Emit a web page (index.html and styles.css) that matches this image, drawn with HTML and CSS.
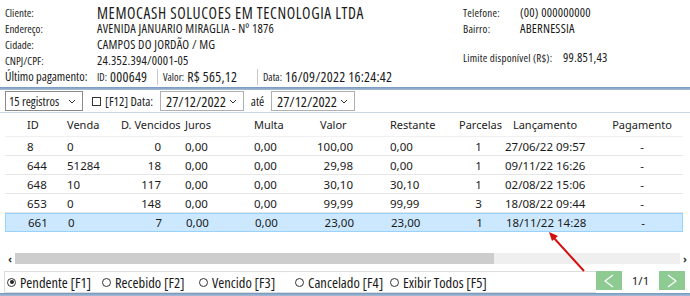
FILE: index.html
```html
<!DOCTYPE html>
<html lang="pt-BR">
<head>
<meta charset="utf-8">
<link rel="stylesheet" href="styles.css">
</head>
<body>
<div class="page">
  <header class="info">
    <div class="info-left">
      <div class="row"><span class="lbl">Cliente:</span><span class="val big">MEMOCASH SOLUCOES EM TECNOLOGIA LTDA</span></div>
      <div class="row"><span class="lbl">Endereço:</span><span class="val">AVENIDA JANUARIO MIRAGLIA - Nº 1876</span></div>
      <div class="row"><span class="lbl">Cidade:</span><span class="val">CAMPOS DO JORDÃO / MG</span></div>
      <div class="row"><span class="lbl">CNPJ/CPF:</span><span class="val">24.352.394/0001-05</span></div>
      <div class="row"><span class="lbl lbl-pay">Último pagamento:</span>
        <span class="pay">
          <span class="pay-item pay-id"><span class="small">ID:</span><span class="num">000649</span></span>
          <span class="pay-item pay-valor"><span class="small">Valor:</span><span class="num">R$ 565,12</span></span>
          <span class="pay-item pay-data"><span class="small">Data:</span><span class="num">16/09/2022 16:24:42</span></span>
        </span>
      </div>
    </div>
    <div class="info-right">
      <div class="row"><span class="rlbl">Telefone:</span><span class="val">(00) 000000000</span></div>
      <div class="row"><span class="rlbl">Bairro:</span><span class="val">ABERNESSIA</span></div>
      <div class="row row-gap"></div>
      <div class="row"><span class="rlbl wide">Limite disponível (R$):</span><span class="val">99.851,43</span></div>
    </div>
  </header>
  <div class="rule"></div>
  <div class="filters">
    <div class="select">15 registros<svg class="chev" viewBox="0 0 8 5" width="8" height="5"><path d="M1 1 L4 4 L7 1" fill="none" stroke="#333" stroke-width="1"/></svg></div>
    <label class="check"><span class="box"></span>[F12] Data:</label>
    <div class="date">27/12/2022<svg class="chev" viewBox="0 0 8 5" width="8" height="5"><path d="M1 1 L4 4 L7 1" fill="none" stroke="#333" stroke-width="1"/></svg></div>
    <span class="ate">até</span>
    <div class="date">27/12/2022<svg class="chev" viewBox="0 0 8 5" width="8" height="5"><path d="M1 1 L4 4 L7 1" fill="none" stroke="#333" stroke-width="1"/></svg></div>
  </div>
  <div class="grid">
    <div class="tr th">
      <span class="c-id">ID</span><span class="c-venda">Venda</span><span class="c-dv h">D. Vencidos</span><span class="c-juros">Juros</span><span class="c-multa">Multa</span><span class="c-valor h">Valor</span><span class="c-rest">Restante</span><span class="c-parc h">Parcelas</span><span class="c-lanc">Lançamento</span><span class="c-pag">Pagamento</span>
    </div>
    <div class="tr">
      <span class="c-id">8</span><span class="c-venda">0</span><span class="c-dv">0</span><span class="c-juros">0,00</span><span class="c-multa">0,00</span><span class="c-valor">100,00</span><span class="c-rest">0,00</span><span class="c-parc">1</span><span class="c-lanc">27/06/22 09:57</span><span class="c-pag">-</span>
    </div>
    <div class="tr">
      <span class="c-id">644</span><span class="c-venda">51284</span><span class="c-dv">18</span><span class="c-juros">0,00</span><span class="c-multa">0,00</span><span class="c-valor">29,98</span><span class="c-rest">0,00</span><span class="c-parc">1</span><span class="c-lanc">09/11/22 16:26</span><span class="c-pag">-</span>
    </div>
    <div class="tr">
      <span class="c-id">648</span><span class="c-venda">10</span><span class="c-dv">117</span><span class="c-juros">0,00</span><span class="c-multa">0,00</span><span class="c-valor">30,10</span><span class="c-rest">30,10</span><span class="c-parc">1</span><span class="c-lanc">02/08/22 15:06</span><span class="c-pag">-</span>
    </div>
    <div class="tr">
      <span class="c-id">653</span><span class="c-venda">0</span><span class="c-dv">148</span><span class="c-juros">0,00</span><span class="c-multa">0,00</span><span class="c-valor">99,99</span><span class="c-rest">99,99</span><span class="c-parc">3</span><span class="c-lanc">18/08/22 09:44</span><span class="c-pag">-</span>
    </div>
    <div class="tr sel">
      <span class="c-id">661</span><span class="c-venda">0</span><span class="c-dv">7</span><span class="c-juros">0,00</span><span class="c-multa">0,00</span><span class="c-valor">23,00</span><span class="c-rest">23,00</span><span class="c-parc">1</span><span class="c-lanc">18/11/22 14:28</span><span class="c-pag">-</span>
    </div>
  </div>
  <div class="hscroll">
    <span class="sarrow">&lsaquo;</span>
    <div class="track"><div class="thumb"></div></div>
    <span class="sarrow">&rsaquo;</span>
  </div>
  <div class="footer">
    <div class="radios">
      <label class="radio on"><span class="dot"></span>Pendente [F1]</label>
      <label class="radio"><span class="dot"></span>Recebido [F2]</label>
      <label class="radio"><span class="dot"></span>Vencido [F3]</label>
      <label class="radio"><span class="dot"></span>Cancelado [F4]</label>
      <label class="radio"><span class="dot"></span>Exibir Todos [F5]</label>
    </div>
    <div class="pager">
      <span class="pbtn"><svg viewBox="0 0 10 14" width="10" height="14"><path d="M9 1 L1 7 L9 13" fill="none" stroke="#fff" stroke-width="1.2"/></svg></span>
      <span class="pnum">1/1</span>
      <span class="pbtn"><svg viewBox="0 0 10 14" width="10" height="14"><path d="M1 1 L9 7 L1 13" fill="none" stroke="#fff" stroke-width="1.2"/></svg></span>
    </div>
  </div>
  <div class="rule"></div>
  <svg class="arrow" width="690" height="296" viewBox="0 0 690 296">
    <line x1="584" y1="271" x2="553" y2="237" stroke="#d40f0f" stroke-width="2"/>
    <path d="M549 232 L558 236 L552 241 Z" fill="#d40f0f"/>
  </svg>
</div>
</body>
</html>
```
FILE: styles.css
```css
* { box-sizing: border-box; }
html, body { margin: 0; padding: 0; background: #fff; }
body {
  font-family: "Noto Sans", "Open Sans", sans-serif;
  color: #1a1a1a;
  font-size: 11px;
}
.page {
  position: relative;
  width: 690px;
  height: 296px;
  overflow: hidden;
  display: flex;
  flex-direction: column;
}
.info, .filters, .footer {
  font-family: "Open Sans", "Noto Sans", sans-serif;
  font-stretch: 75%;
}

/* header info */
.info {
  height: 88px;
  padding: 5px 0 0 5px;
  display: flex;
}
.info-left { width: 456px; flex: none; }
.info-right { padding-left: 2px; }
.row {
  height: 16px;
  display: flex;
  align-items: center;
  white-space: nowrap;
  line-height: 14px;
}
.lbl { width: 92px; flex: none; font-size: 11px; }
.lbl-pay { font-size: 12.5px; }
.rlbl { width: 57px; flex: none; font-size: 11px; letter-spacing: 0.2px; }
.rlbl.wide { width: 100px; }
.row-gap { height: 13px; }
.val { font-size: 12.5px; letter-spacing: 0.2px; }
.val.big { font-size: 15.5px; letter-spacing: 0.6px; line-height: 16px; }
.pay { display: flex; align-items: center; height: 16px; }
.pay-item { display: flex; align-items: center; gap: 3px; height: 16px; }
.pay-id { width: 60px; }
.pay-valor { width: 100px; border-left: 1px solid #c8c8c8; padding-left: 5px; }
.pay-data { border-left: 1px solid #c8c8c8; padding-left: 5px; }
.small { font-size: 10.5px; }
.num { font-size: 14px; letter-spacing: 0.25px; }

.rule {
  height: 3px;
  flex: none;
  background: linear-gradient(#7496bd, #a9bfd8);
}

/* filters */
.filters {
  height: 23px;
  flex: none;
  display: flex;
  align-items: center;
  padding-left: 5px;
  border-bottom: 1px solid #c9d6e4;
  white-space: nowrap;
}
.select {
  width: 78px;
  height: 20px;
  border: 1px solid #8a8a8a;
  display: flex;
  align-items: center;
  padding-left: 3px;
  font-size: 12.5px;
  position: relative;
}
.chev { position: absolute; right: 6px; top: 7px; }
.check {
  display: flex;
  align-items: center;
  margin-left: 9px;
  width: 68px;
  font-size: 12.5px;
}
.box {
  width: 9px; height: 9px;
  border: 1px solid #333;
  margin-right: 4px;
  flex: none;
}
.date {
  width: 84px;
  height: 20px;
  border: 1px solid #b0b0b0;
  display: flex;
  align-items: center;
  padding-left: 5px;
  font-size: 14.5px;
  position: relative;
}
.ate { width: 27px; text-align: center; font-size: 12.5px; }

/* grid */
.grid { flex: none; padding-left: 5px; height: 139px; }
.tr {
  display: grid;
  grid-template-columns: 57px 53px 68px 67px 66px 69px 67px 53px 80px 98px;
  width: 678px;
  height: 19px;
  align-items: center;
  border-bottom: 1px solid #e6e6e6;
  font-size: 11.5px;
  white-space: nowrap;
}
.tr.th { height: 24px; border-bottom: 1px solid #f0f0f0; color: #222; font-size: 11px; }
.tr.sel { background: #cce8ff; border: 1px solid #99d1ff; }
.c-id { padding-left: 22px; }
.c-venda { padding-left: 5px; }
.c-dv { text-align: right; padding-right: 22px; }
.c-dv.h { text-align: left; padding-left: 6px; padding-right: 0; }
.c-juros { padding-left: 2px; }
.c-multa { padding-left: 4px; }
.c-valor { text-align: right; padding-right: 32px; }
.c-valor.h { text-align: left; padding-left: 4px; padding-right: 0; }
.c-rest { padding-left: 5px; }
.c-parc { text-align: center; }
.c-parc.h { text-align: left; padding-left: 7px; }
.c-lanc { text-align: center; }
.c-pag { text-align: center; padding-left: 16px; }

/* scrollbar */
.hscroll {
  margin-top: 1px;
  height: 11px;
  flex: none;
  display: flex;
  align-items: center;
  padding-left: 5px;
  width: 690px;
}
.sarrow { width: 10px; font-size: 11px; line-height: 11px; text-align: center; font-weight: bold; color: #333; }
.track { width: 667px; height: 11px; background: #efefef; }
.thumb { width: 479px; height: 11px; background: #cdcdcd; }

/* footer */
.footer {
  margin-top: 7px;
  height: 22px;
  flex: none;
  display: flex;
  padding-left: 4px;
}
.radios {
  width: 592px;
  border: 1px solid #dcdcdc;
  border-right: none;
  display: flex;
  align-items: center;
  padding-left: 2px;
  font-size: 14.5px;
  white-space: nowrap;
}
.radio { display: flex; align-items: center; flex: none; }
.radio:nth-child(1) { width: 95px; }
.radio:nth-child(2) { width: 97px; }
.radio:nth-child(3) { width: 96px; }
.radio:nth-child(4) { width: 95px; }
.dot {
  width: 9px; height: 9px;
  border: 1px solid #333;
  border-radius: 50%;
  margin-right: 4px;
  position: relative;
  flex: none;
}
.radio.on .dot::after {
  content: "";
  position: absolute;
  left: 1.5px; top: 1.5px;
  width: 4px; height: 4px;
  border-radius: 50%;
  background: #222;
}
.pager { display: flex; height: 19px; }
.pbtn {
  width: 26px;
  height: 19px;
  background: #8dcb93;
  display: flex;
  align-items: center;
  justify-content: center;
}
.pnum { width: 37px; text-align: center; font-size: 11.5px; line-height: 19px; font-stretch: 100%; font-family: "Noto Sans", sans-serif; }

.arrow { position: absolute; left: 0; top: 0; pointer-events: none; }
```
